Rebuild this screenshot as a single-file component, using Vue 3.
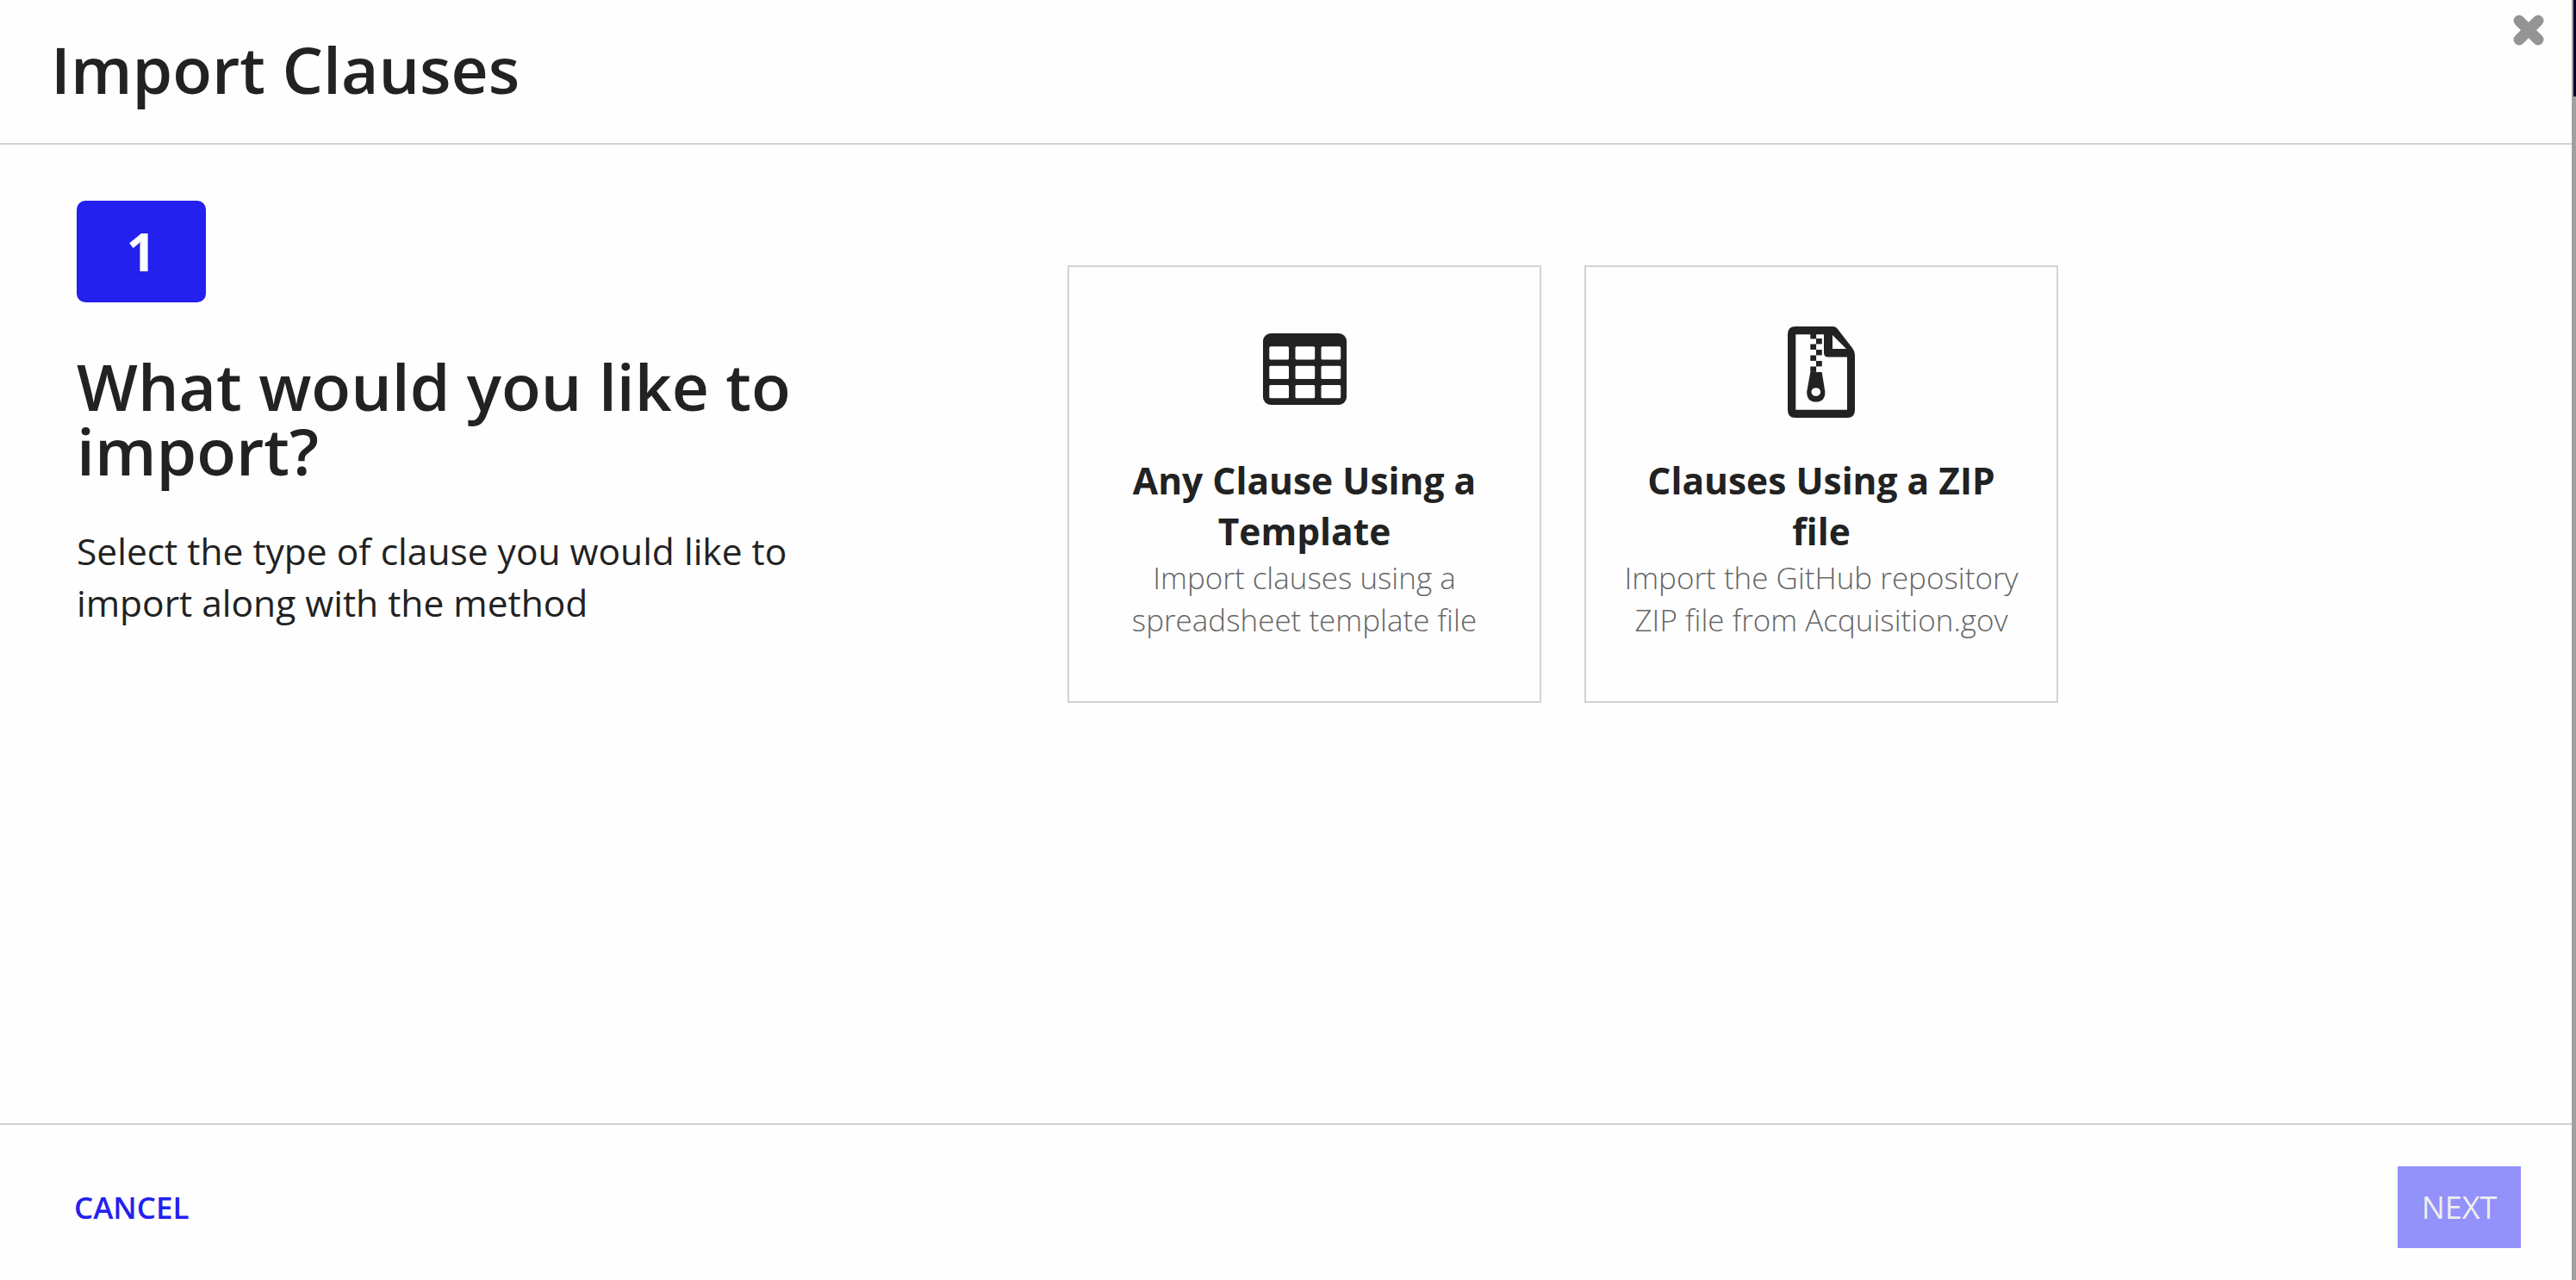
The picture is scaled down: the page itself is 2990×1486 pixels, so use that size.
<template>
  <div class="page">
    <header class="modal-header">
      <h1 class="modal-title">Import Clauses</h1>
      <button class="close-btn" aria-label="Close">
        <svg viewBox="0 0 36 36" width="36" height="36">
          <path d="M7 7 L29 29 M29 7 L7 29" stroke="#949494" stroke-width="13" stroke-linecap="round" fill="none" />
        </svg>
      </button>
    </header>

    <main class="modal-body">
      <section class="intro">
        <div class="step-badge">1</div>
        <h2 class="intro-title">What would you like to import?</h2>
        <p class="intro-text">Select the type of clause you would like to import along with the method</p>
      </section>

      <section class="options">
        <div v-for="option in options" :key="option.title" class="option-card">
          <div class="option-icon">
            <svg v-if="option.icon === 'table'" class="table-icon" viewBox="0 0 97 83" width="97" height="83">
              <rect width="97" height="83" rx="9" fill="#222" />
              <template v-for="y in [15.3, 37.7, 60]" :key="y">
                <rect v-for="x in [7.3, 37.5, 67.5]" :key="x" :x="x" :y="y" width="22.7" height="15.2" rx="1.5" fill="#fff" />
              </template>
            </svg>
            <svg v-else viewBox="0 0 78 106" width="78" height="106">
              <path
                fill="#222"
                fill-rule="evenodd"
                d="M9 0H52Q56 0 58 3L75 25Q78 29 78 33V97Q78 106 69 106H9Q0 106 0 97V9Q0 0 9 0ZM9.3 9.3V96.7H69V35.5H47Q42 35.5 42 30.5V9.3ZM52 10V26H68Z"
              />
              <rect v-for="c in zipper" :key="c.y" :x="c.x" :y="c.y" width="6.8" height="6.4" fill="#222" />
              <path
                fill="#222"
                fill-rule="evenodd"
                d="M26.3 53H39.7L43.4 76Q43.4 87.6 32.8 87.6Q22.2 87.6 22.2 76ZM32.8 71.2a5.3 4.8 0 1 0 .01 0Z"
              />
            </svg>
          </div>
          <h3 class="option-title">{{ option.title }}</h3>
          <p class="option-text">{{ option.text }}</p>
        </div>
      </section>
    </main>

    <footer class="modal-footer">
      <a class="cancel-link">CANCEL</a>
      <button class="next-btn">NEXT</button>
    </footer>

    <div class="edge"></div>
  </div>
</template>

<script setup>
const options = [
  {
    icon: 'table',
    title: 'Any Clause Using a Template',
    text: 'Import clauses using a spreadsheet template file',
  },
  {
    icon: 'zip',
    title: 'Clauses Using a ZIP file',
    text: 'Import the GitHub repository ZIP file from Acquisition.gov',
  },
];

// zipper teeth, alternating left/right
const zipper = [
  { x: 26.3, y: 8 },
  { x: 33, y: 14 },
  { x: 26.3, y: 20.5 },
  { x: 33, y: 27 },
  { x: 26.3, y: 33.5 },
  { x: 33, y: 40 },
  { x: 26.3, y: 46.5 },
];
</script>

<style>
html,
body {
  margin: 0;
  background: #fff;
}
</style>

<style scoped>
.page {
  position: relative;
  display: flex;
  flex-direction: column;
  width: 2990px;
  height: 1486px;
  overflow: hidden;
  font-family: 'Open Sans', sans-serif;
  color: #222;
  background: #fefefe;
}

.modal-header {
  box-sizing: border-box;
  height: 168px;
  padding-left: 59px;
  display: flex;
  align-items: center;
  border-bottom: 2px solid #d3d3d3;
}

.modal-title {
  margin: 0;
  font-size: 75px;
  font-weight: 600;
  line-height: 1;
  padding-bottom: 6px;
}

.close-btn {
  position: absolute;
  top: 17px;
  left: 2917px;
  width: 36px;
  height: 36px;
  padding: 0;
  border: 0;
  background: none;
}

.close-btn svg {
  display: block;
}

.modal-body {
  flex: 1;
  display: flex;
  padding-left: 89px;
}

.intro {
  width: 860px;
  padding-top: 65px;
}

.step-badge {
  width: 150px;
  height: 118px;
  border-radius: 10px;
  background: #2420ee;
  color: #fff;
  font-size: 60px;
  font-weight: 700;
  line-height: 118px;
  text-align: center;
}

.intro-title {
  margin: 60px 0 0;
  font-size: 75px;
  font-weight: 600;
  line-height: 75px;
}

.intro-text {
  margin: 49px 0 0;
  font-size: 42.5px;
  line-height: 60px;
}

.options {
  display: flex;
  gap: 50px;
  margin-left: 290px;
  padding-top: 140px;
  align-items: flex-start;
}

.option-card {
  box-sizing: border-box;
  width: 550px;
  height: 508px;
  border: 2px solid #d3d3d3;
  padding: 0 30px;
  text-align: center;
}

.option-icon {
  height: 105px;
  margin-top: 69px;
  display: flex;
  align-items: flex-start;
  justify-content: center;
}

.option-icon svg {
  display: block;
}

.table-icon {
  margin-top: 8px;
}

.option-title {
  margin: 44px 40px 0;
  font-size: 42.5px;
  font-weight: 700;
  line-height: 59px;
}

.option-text {
  margin: 0;
  font-size: 35px;
  font-weight: 300;
  line-height: 49px;
  color: #666;
}

.modal-footer {
  box-sizing: border-box;
  height: 182px;
  padding: 48px 64px 0 86px;
  display: flex;
  justify-content: space-between;
  align-items: flex-start;
  border-top: 2px solid #d3d3d3;
}

.cancel-link {
  font-size: 35px;
  font-weight: 600;
  color: #2420ee;
  line-height: 95px;
}

.next-btn {
  width: 143px;
  height: 95px;
  border: 0;
  padding: 0;
  background: #9391fa;
  color: #eee;
  font-family: inherit;
  font-size: 36px;
}

.edge {
  position: absolute;
  top: 0;
  right: 0;
  width: 5px;
  height: 100%;
  background: #a0a0a0;
}

.edge::after {
  content: '';
  position: absolute;
  top: 0;
  right: 0;
  width: 3px;
  height: 112px;
  background: #00002e;
}
</style>
